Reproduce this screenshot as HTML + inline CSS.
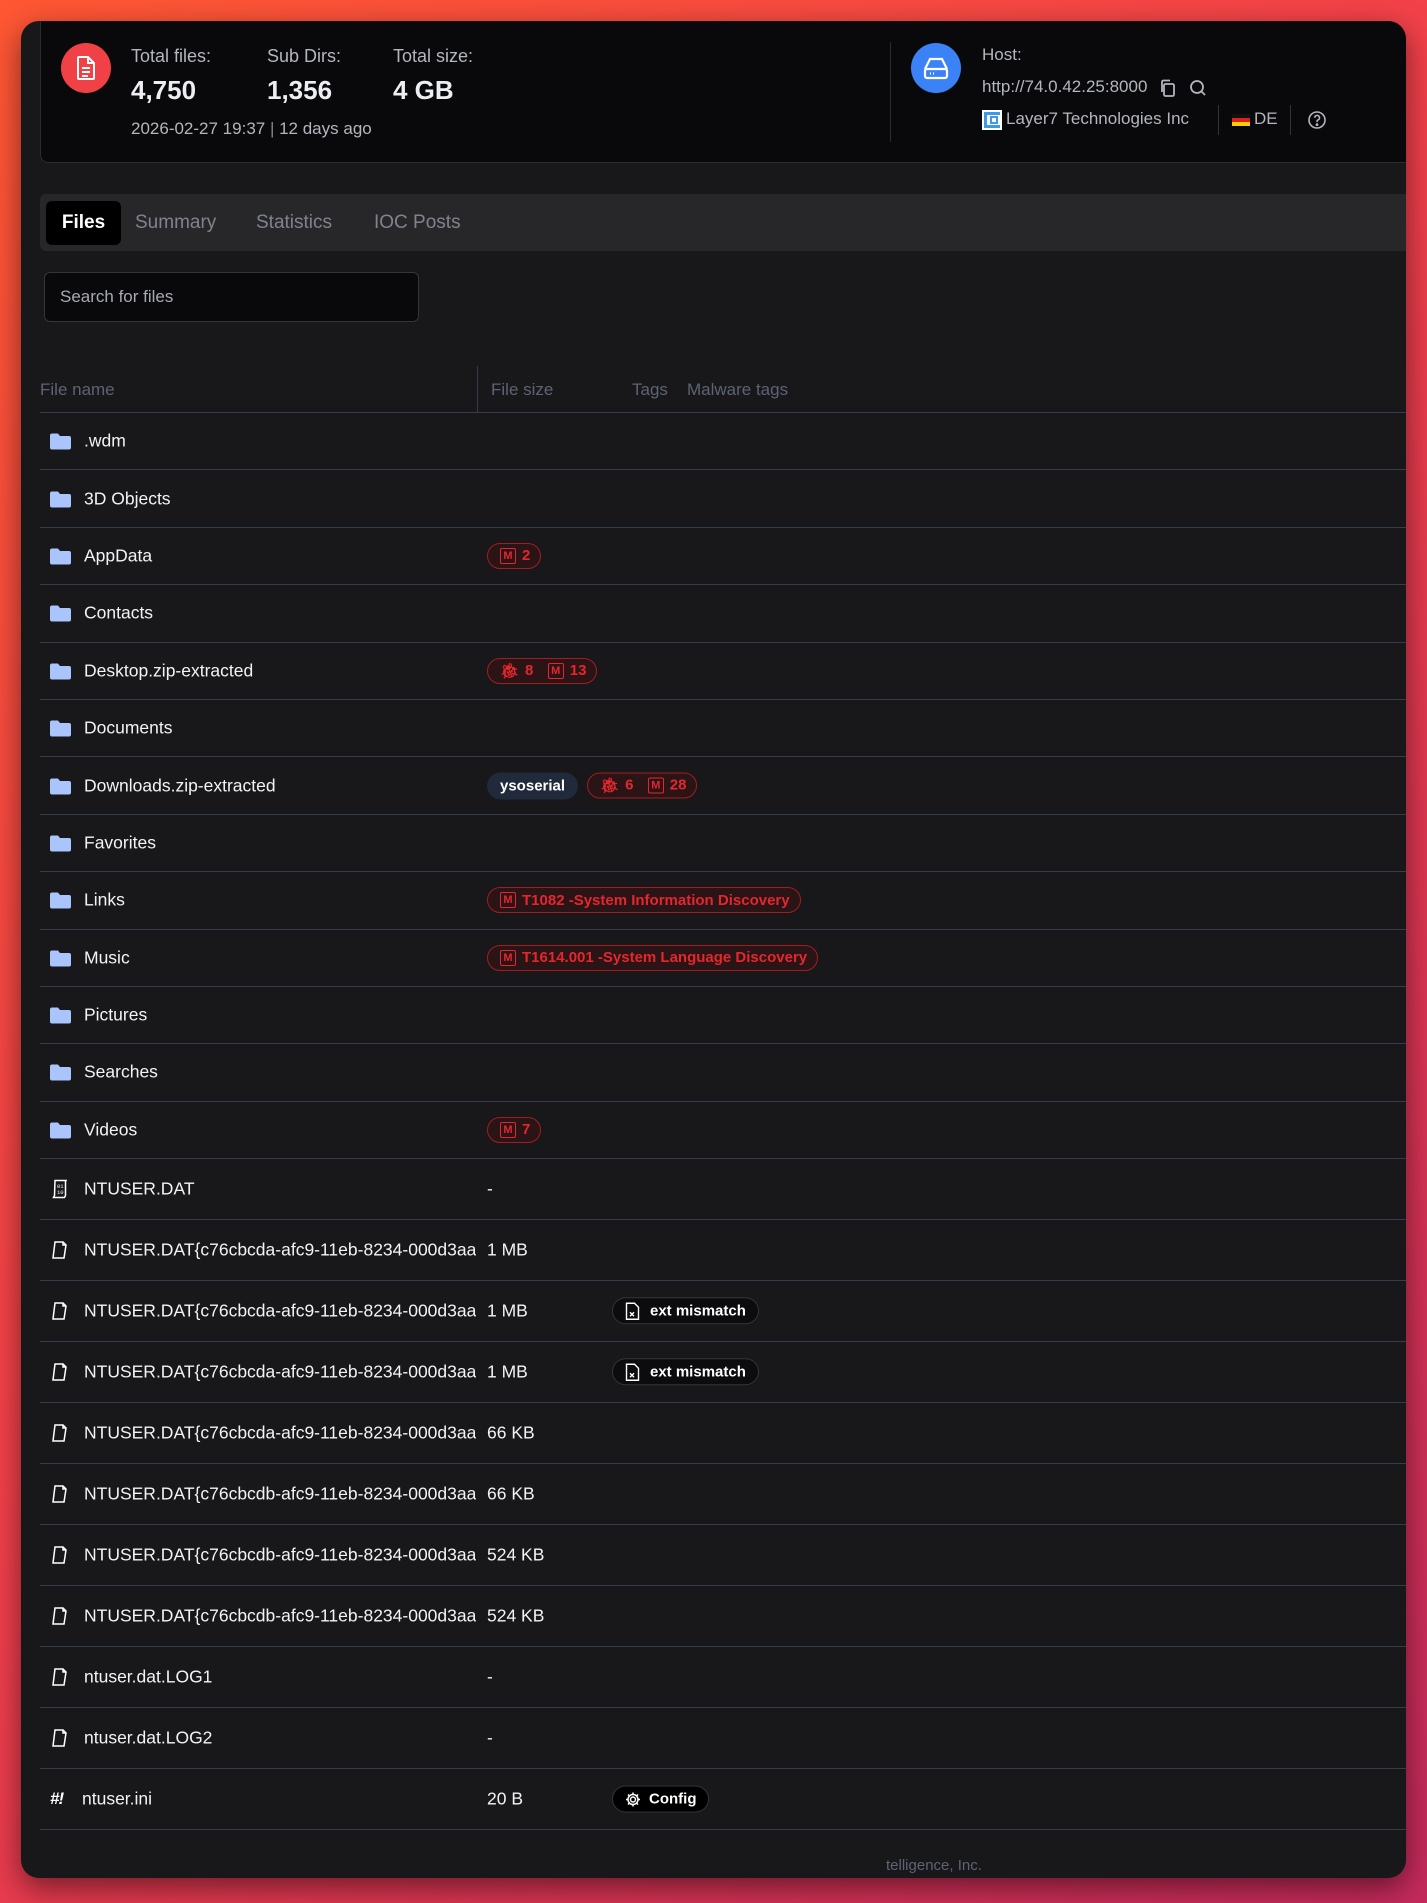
<!DOCTYPE html>
<html><head><meta charset="utf-8"><style>
*{box-sizing:border-box;margin:0;padding:0}
html,body{width:1427px;height:1903px;overflow:hidden}
body{background:linear-gradient(135deg,#ff5733 0%,#f2404a 45%,#c42a5c 100%);font-family:"Liberation Sans",sans-serif;position:relative}
.card{position:absolute;left:21px;top:21px;width:1385px;height:1857px;background:#18181b;border-radius:18px;overflow:hidden;box-shadow:0 10px 30px rgba(0,0,0,.5)}
.hdr{position:absolute;left:19px;top:0;right:0;height:142px;background:#09090b;border:1px solid #2c2c30;border-top:none;border-right:none;border-radius:0 0 0 8px}
.circ{position:absolute;width:50px;height:50px;border-radius:50%;display:flex;align-items:center;justify-content:center}
.lbl{position:absolute;color:#b4b6be;font-size:18px}
.num{position:absolute;color:#eceef2;font-size:26px;font-weight:bold}
.tabs{position:absolute;left:19px;top:173px;right:0;height:57px;background:#27272a;border-radius:6px 0 0 6px}
.tab{position:absolute;top:7px;height:44px;line-height:44px;font-size:19px;color:#80838e}
.search{position:absolute;left:23px;top:251px;width:375px;height:50px;background:#09090b;border:1px solid #34343a;border-radius:6px;color:#a8aab3;font-size:17px;line-height:48px;padding-left:15px}
.th{position:absolute;top:359px;color:#5d6373;font-size:17px}
.rows{position:absolute;left:19px;top:391px;right:0}
.row{position:relative;border-bottom:1px solid #363c4a;color:#f2f3f5;font-size:17.5px}
.row .ic{position:absolute;left:10px;top:50%;transform:translateY(-50%)}
.row .nm{position:absolute;left:44px;top:50%;transform:translateY(-50%);width:392px;white-space:nowrap;overflow:hidden}
.row .sz{position:absolute;left:447px;top:50%;transform:translateY(-50%)}
.row .bd{position:absolute;left:447px;top:50%;transform:translateY(-50%);display:flex;gap:9px}
.row .tg{position:absolute;left:572px;top:50%;transform:translateY(-50%)}
.mb{display:inline-flex;align-items:center;gap:6px;height:26px;padding:0 10px 0 12px;border:1px solid #a11d22;border-radius:13px;background:#2a1416;color:#e5262e;font-size:15px;font-weight:bold;white-space:nowrap}
.gb{display:inline-flex;align-items:center;height:27px;padding:0 13px;border-radius:14px;background:#212a3a;color:#fff;font-size:15px;font-weight:bold}
.pb{display:inline-flex;align-items:center;gap:10px;height:27px;padding:0 12px;border:1px solid #34343a;border-radius:14px;background:#0c0c0e;color:#fff;font-size:15px;font-weight:bold}
.f{height:57.4px}.r{height:61px}
.M{border:1.8px solid #e5262e;border-radius:2px;font-size:11px;width:16px;height:16px;display:inline-flex;align-items:center;justify-content:center}
</style></head><body>
<div class="card">
 <div class="hdr">
  <div class="circ" style="left:20px;top:22px;background:#ef4146">
   <svg width="24" height="26" viewBox="0 0 24 26" fill="none" stroke="#fff" stroke-width="2"><path d="M5 2h9l6 6v15a1 1 0 0 1-1 1H5a1 1 0 0 1-1-1V3a1 1 0 0 1 1-1z"/><path d="M14 2v6h6M8 13h8M8 17h8M8 21h6"/></svg>
  </div>
  <div class="lbl" style="left:90px;top:25px">Total files:</div>
  <div class="lbl" style="left:226px;top:25px">Sub Dirs:</div>
  <div class="lbl" style="left:352px;top:25px">Total size:</div>
  <div class="num" style="left:90px;top:54px">4,750</div>
  <div class="num" style="left:226px;top:54px">1,356</div>
  <div class="num" style="left:352px;top:54px">4 GB</div>
  <div class="lbl" style="left:90px;top:98px;font-size:17px">2026-02-27 19:37 <span style="color:#888">|</span> 12 days ago</div>
  <div style="position:absolute;left:849px;top:21px;width:1px;height:100px;background:#2c2c30"></div>
  <div class="circ" style="left:870px;top:22px;background:#3b82f6">
   <svg width="28" height="26" viewBox="0 0 28 26" fill="none" stroke="#fff" stroke-width="2.2"><path d="M3 14 L8 4 H20 L25 14"/><rect x="3" y="14" width="22" height="9" rx="2"/><path d="M8 18.5h1M11 18.5h1"/></svg>
  </div>
  <div class="lbl" style="left:941px;top:24px;font-size:17px">Host:</div>
  <div class="lbl" style="left:941px;top:56px;font-size:17px">http://74.0.42.25:8000</div>
  <svg style="position:absolute;left:1117px;top:57px" width="20" height="20" viewBox="0 0 20 20" fill="none" stroke="#b4b6be" stroke-width="1.8"><rect x="6" y="6" width="10" height="12" rx="1.5"/><path d="M4 14V4a1.5 1.5 0 0 1 1.5-1.5H12"/></svg>
  <svg style="position:absolute;left:1147px;top:57px" width="20" height="20" viewBox="0 0 20 20" fill="none" stroke="#b4b6be" stroke-width="1.8"><circle cx="9" cy="9" r="6"/><path d="M13.5 13.5 17 17"/></svg>
  <div style="position:absolute;left:941px;top:89px;width:20px;height:20px;background:#fff"><div style="position:absolute;left:2px;top:2px;width:16px;height:16px;border:3px solid #3b9be8;border-right:none"></div><div style="position:absolute;left:8px;top:6px;width:8px;height:8px;border:2px solid #3b9be8"></div></div>
  <div class="lbl" style="left:965px;top:88px;font-size:17px">Layer7 Technologies Inc</div>
  <div style="position:absolute;left:1177px;top:84px;width:1px;height:30px;background:#333"></div>
  <div style="position:absolute;left:1191px;top:93px;width:18px;height:12px;background:linear-gradient(#111 0 33%,#dd1f1f 33% 66%,#ffcc00 66%)"></div>
  <div class="lbl" style="left:1213px;top:88px;font-size:17px">DE</div>
  <div style="position:absolute;left:1249px;top:84px;width:1px;height:30px;background:#333"></div>
  <svg style="position:absolute;left:1266px;top:89px" width="20" height="20" viewBox="0 0 20 20" fill="none" stroke="#b4b6be" stroke-width="1.6"><circle cx="10" cy="10" r="8"/><path d="M7.7 7.8a2.4 2.4 0 1 1 3.3 2.2c-.7.3-1 .8-1 1.5v.6"/><circle cx="10" cy="14.6" r=".6" fill="#b4b6be"/></svg>
 </div>
 <div class="tabs">
  <div class="tab" style="left:6px;width:75px;background:#000;color:#fff;border-radius:6px;text-align:center;font-weight:bold">Files</div>
  <div class="tab" style="left:95px">Summary</div>
  <div class="tab" style="left:216px">Statistics</div>
  <div class="tab" style="left:334px">IOC Posts</div>
 </div>
 <div class="search">Search for files</div>
 <div class="th" style="left:19px">File name</div>
 <div style="position:absolute;left:456px;top:345px;width:1px;height:46px;background:#363c4a"></div>
 <div class="th" style="left:470px">File size</div>
 <div class="th" style="left:611px">Tags</div>
 <div class="th" style="left:666px">Malware tags</div>
 <div style="position:absolute;left:19px;right:0;top:391px;height:1px;background:#363c4a"></div>
 <div class="rows" style="top:392px">
  <div class="row f"><svg class="ic" width="21" height="17" viewBox="0 0 21 17"><path d="M2 1h6l2 2.5h9a2 2 0 0 1 2 2V15a2 2 0 0 1-2 2H2a2 2 0 0 1-2-2V3a2 2 0 0 1 2-2z" fill="#a9c5fb"/></svg><div class="nm">.wdm</div></div>
  <div class="row f"><svg class="ic" width="21" height="17" viewBox="0 0 21 17"><path d="M2 1h6l2 2.5h9a2 2 0 0 1 2 2V15a2 2 0 0 1-2 2H2a2 2 0 0 1-2-2V3a2 2 0 0 1 2-2z" fill="#a9c5fb"/></svg><div class="nm">3D Objects</div></div>
  <div class="row f"><svg class="ic" width="21" height="17" viewBox="0 0 21 17"><path d="M2 1h6l2 2.5h9a2 2 0 0 1 2 2V15a2 2 0 0 1-2 2H2a2 2 0 0 1-2-2V3a2 2 0 0 1 2-2z" fill="#a9c5fb"/></svg><div class="nm">AppData</div><div class="bd"><span class="mb"><span class="M">M</span>2</span></div></div>
  <div class="row f"><svg class="ic" width="21" height="17" viewBox="0 0 21 17"><path d="M2 1h6l2 2.5h9a2 2 0 0 1 2 2V15a2 2 0 0 1-2 2H2a2 2 0 0 1-2-2V3a2 2 0 0 1 2-2z" fill="#a9c5fb"/></svg><div class="nm">Contacts</div></div>
  <div class="row f"><svg class="ic" width="21" height="17" viewBox="0 0 21 17"><path d="M2 1h6l2 2.5h9a2 2 0 0 1 2 2V15a2 2 0 0 1-2 2H2a2 2 0 0 1-2-2V3a2 2 0 0 1 2-2z" fill="#a9c5fb"/></svg><div class="nm">Desktop.zip-extracted</div><div class="bd"><span class="mb"><span style="font-size:15px">🐞︎</span>8&nbsp;&nbsp;<span class="M">M</span>13</span></div></div>
  <div class="row f"><svg class="ic" width="21" height="17" viewBox="0 0 21 17"><path d="M2 1h6l2 2.5h9a2 2 0 0 1 2 2V15a2 2 0 0 1-2 2H2a2 2 0 0 1-2-2V3a2 2 0 0 1 2-2z" fill="#a9c5fb"/></svg><div class="nm">Documents</div></div>
  <div class="row f"><svg class="ic" width="21" height="17" viewBox="0 0 21 17"><path d="M2 1h6l2 2.5h9a2 2 0 0 1 2 2V15a2 2 0 0 1-2 2H2a2 2 0 0 1-2-2V3a2 2 0 0 1 2-2z" fill="#a9c5fb"/></svg><div class="nm">Downloads.zip-extracted</div><div class="bd"><span class="gb">ysoserial</span><span class="mb"><span style="font-size:15px">🐞︎</span>6&nbsp;&nbsp;<span class="M">M</span>28</span></div></div>
  <div class="row f"><svg class="ic" width="21" height="17" viewBox="0 0 21 17"><path d="M2 1h6l2 2.5h9a2 2 0 0 1 2 2V15a2 2 0 0 1-2 2H2a2 2 0 0 1-2-2V3a2 2 0 0 1 2-2z" fill="#a9c5fb"/></svg><div class="nm">Favorites</div></div>
  <div class="row f"><svg class="ic" width="21" height="17" viewBox="0 0 21 17"><path d="M2 1h6l2 2.5h9a2 2 0 0 1 2 2V15a2 2 0 0 1-2 2H2a2 2 0 0 1-2-2V3a2 2 0 0 1 2-2z" fill="#a9c5fb"/></svg><div class="nm">Links</div><div class="bd"><span class="mb"><span class="M">M</span>T1082 -System Information Discovery</span></div></div>
  <div class="row f"><svg class="ic" width="21" height="17" viewBox="0 0 21 17"><path d="M2 1h6l2 2.5h9a2 2 0 0 1 2 2V15a2 2 0 0 1-2 2H2a2 2 0 0 1-2-2V3a2 2 0 0 1 2-2z" fill="#a9c5fb"/></svg><div class="nm">Music</div><div class="bd"><span class="mb"><span class="M">M</span>T1614.001 -System Language Discovery</span></div></div>
  <div class="row f"><svg class="ic" width="21" height="17" viewBox="0 0 21 17"><path d="M2 1h6l2 2.5h9a2 2 0 0 1 2 2V15a2 2 0 0 1-2 2H2a2 2 0 0 1-2-2V3a2 2 0 0 1 2-2z" fill="#a9c5fb"/></svg><div class="nm">Pictures</div></div>
  <div class="row f"><svg class="ic" width="21" height="17" viewBox="0 0 21 17"><path d="M2 1h6l2 2.5h9a2 2 0 0 1 2 2V15a2 2 0 0 1-2 2H2a2 2 0 0 1-2-2V3a2 2 0 0 1 2-2z" fill="#a9c5fb"/></svg><div class="nm">Searches</div></div>
  <div class="row f"><svg class="ic" width="21" height="17" viewBox="0 0 21 17"><path d="M2 1h6l2 2.5h9a2 2 0 0 1 2 2V15a2 2 0 0 1-2 2H2a2 2 0 0 1-2-2V3a2 2 0 0 1 2-2z" fill="#a9c5fb"/></svg><div class="nm">Videos</div><div class="bd"><span class="mb"><span class="M">M</span>7</span></div></div>
  <div class="row r"><svg class="ic" width="20" height="20" viewBox="0 0 20 20" fill="none" stroke="#fff" stroke-width="1.5"><path d="M5 1.5h11l-.5 1v14l-1 2h-11l1-2z"/><text x="7" y="9" font-size="5.5" fill="#fff" stroke="none" font-family="Liberation Mono">01</text><text x="7" y="15" font-size="5.5" fill="#fff" stroke="none" font-family="Liberation Mono">10</text></svg><div class="nm">NTUSER.DAT</div><div class="sz">-</div></div>
  <div class="row r"><svg class="ic" width="20" height="20" viewBox="0 0 20 20" fill="none" stroke="#fff" stroke-width="1.5"><path d="M5 2h8l3 3-2 13H3z"/><path d="M13 2v3h3"/></svg><div class="nm">NTUSER.DAT{c76cbcda-afc9-11eb-8234-000d3aa6d50e}.TM.blf</div><div class="sz">1 MB</div></div>
  <div class="row r"><svg class="ic" width="20" height="20" viewBox="0 0 20 20" fill="none" stroke="#fff" stroke-width="1.5"><path d="M5 2h8l3 3-2 13H3z"/><path d="M13 2v3h3"/></svg><div class="nm">NTUSER.DAT{c76cbcda-afc9-11eb-8234-000d3aa6d50e}.TMContainer1</div><div class="sz">1 MB</div><div class="tg"><span class="pb"><svg width="15" height="18" viewBox="0 0 15 18" fill="none" stroke="#fff" stroke-width="1.4"><path d="M1.5 1h8l4 4v12h-12z"/><path d="M5 10l4 4M9 10l-4 4"/></svg>ext mismatch</span></div></div>
  <div class="row r"><svg class="ic" width="20" height="20" viewBox="0 0 20 20" fill="none" stroke="#fff" stroke-width="1.5"><path d="M5 2h8l3 3-2 13H3z"/><path d="M13 2v3h3"/></svg><div class="nm">NTUSER.DAT{c76cbcda-afc9-11eb-8234-000d3aa6d50e}.TMContainer2</div><div class="sz">1 MB</div><div class="tg"><span class="pb"><svg width="15" height="18" viewBox="0 0 15 18" fill="none" stroke="#fff" stroke-width="1.4"><path d="M1.5 1h8l4 4v12h-12z"/><path d="M5 10l4 4M9 10l-4 4"/></svg>ext mismatch</span></div></div>
  <div class="row r"><svg class="ic" width="20" height="20" viewBox="0 0 20 20" fill="none" stroke="#fff" stroke-width="1.5"><path d="M5 2h8l3 3-2 13H3z"/><path d="M13 2v3h3"/></svg><div class="nm">NTUSER.DAT{c76cbcda-afc9-11eb-8234-000d3aa6d50e}.regtrans-ms</div><div class="sz">66 KB</div></div>
  <div class="row r"><svg class="ic" width="20" height="20" viewBox="0 0 20 20" fill="none" stroke="#fff" stroke-width="1.5"><path d="M5 2h8l3 3-2 13H3z"/><path d="M13 2v3h3"/></svg><div class="nm">NTUSER.DAT{c76cbcdb-afc9-11eb-8234-000d3aa6d50e}.TM.blf</div><div class="sz">66 KB</div></div>
  <div class="row r"><svg class="ic" width="20" height="20" viewBox="0 0 20 20" fill="none" stroke="#fff" stroke-width="1.5"><path d="M5 2h8l3 3-2 13H3z"/><path d="M13 2v3h3"/></svg><div class="nm">NTUSER.DAT{c76cbcdb-afc9-11eb-8234-000d3aa6d50e}.TMContainer1</div><div class="sz">524 KB</div></div>
  <div class="row r"><svg class="ic" width="20" height="20" viewBox="0 0 20 20" fill="none" stroke="#fff" stroke-width="1.5"><path d="M5 2h8l3 3-2 13H3z"/><path d="M13 2v3h3"/></svg><div class="nm">NTUSER.DAT{c76cbcdb-afc9-11eb-8234-000d3aa6d50e}.TMContainer2</div><div class="sz">524 KB</div></div>
  <div class="row r"><svg class="ic" width="20" height="20" viewBox="0 0 20 20" fill="none" stroke="#fff" stroke-width="1.5"><path d="M5 2h8l3 3-2 13H3z"/><path d="M13 2v3h3"/></svg><div class="nm">ntuser.dat.LOG1</div><div class="sz">-</div></div>
  <div class="row r"><svg class="ic" width="20" height="20" viewBox="0 0 20 20" fill="none" stroke="#fff" stroke-width="1.5"><path d="M5 2h8l3 3-2 13H3z"/><path d="M13 2v3h3"/></svg><div class="nm">ntuser.dat.LOG2</div><div class="sz">-</div></div>
  <div class="row r"><div class="ic" style="font-weight:bold;font-style:italic;font-size:17px;color:#fff;letter-spacing:-1px">#!</div><div class="nm" style="left:42px">ntuser.ini</div><div class="sz">20 B</div><div class="tg"><span class="pb" style="background:#000;gap:8px"><svg width="16" height="16" viewBox="0 0 16 16" fill="none" stroke="#fff" stroke-width="1.5"><circle cx="8" cy="8" r="2.5"/><path d="M8 1v2.5M8 12.5V15M1 8h2.5M12.5 8H15M3 3l1.8 1.8M11.2 11.2 13 13M3 13l1.8-1.8M11.2 4.8 13 3"/><circle cx="8" cy="8" r="5"/></svg>Config</span></div></div>
 </div>
 <div style="position:absolute;left:865px;top:1836px;color:#5d6373;font-size:15px">telligence, Inc.</div>
</div>
</body></html>
